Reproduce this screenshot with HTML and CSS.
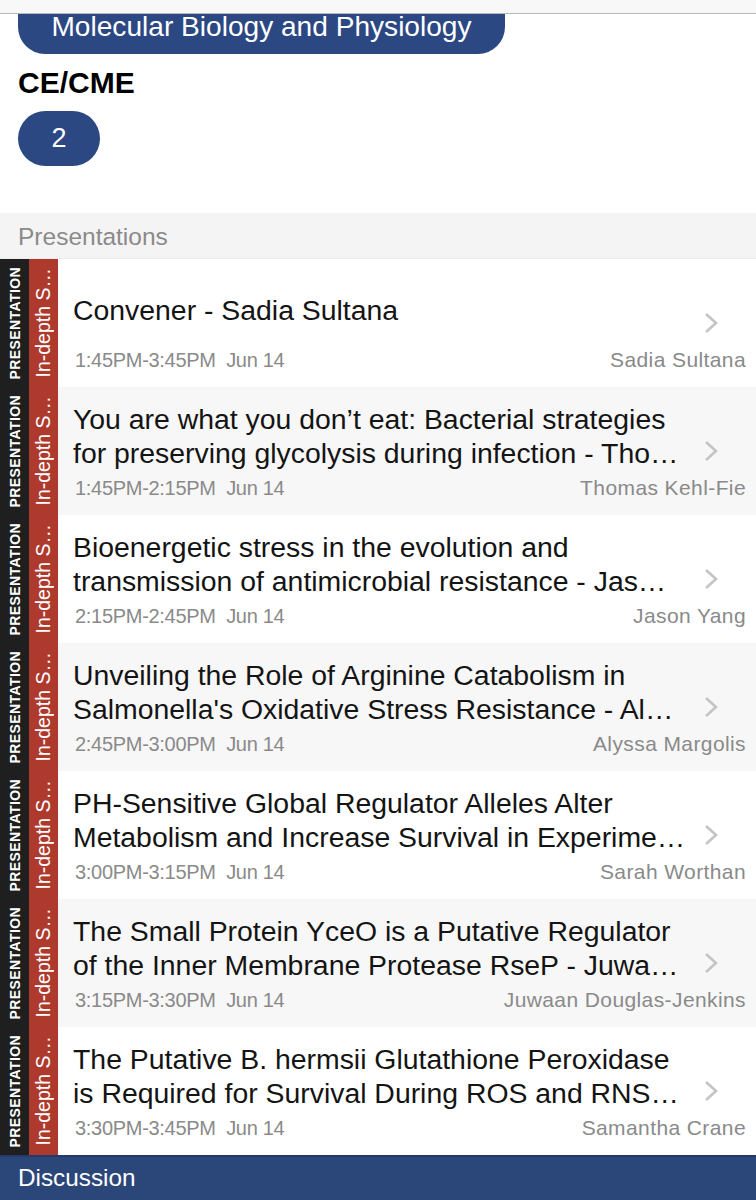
FILE: index.html
```html
<!DOCTYPE html>
<html>
<head>
<meta charset="utf-8">
<link rel="stylesheet" href="styles.css">
</head>
<body>
<div class="topbar"></div>
<div class="info">
  <div class="pill pill-wide">Molecular Biology and Physiology</div>
  <h2 class="label">CE/CME</h2>
  <div class="pill pill-num">2</div>
</div>
<div class="section">Presentations</div>
<div class="list">
  <div class="row">
    <div class="strip strip-type"><span>PRESENTATION</span></div>
    <div class="strip strip-track"><span>In-depth S…</span></div>
    <div class="content">
      <div class="title single"><span>Convener - Sadia Sultana</span></div>
      <svg class="chev" viewBox="0 0 14 22"><path d="M2 2 L12 11 L2 20" /></svg>
      <div class="meta"><span class="time">1:45PM-3:45PM&nbsp;&nbsp;Jun 14</span><span class="who">Sadia Sultana</span></div>
    </div>
  </div>
  <div class="row alt">
    <div class="strip strip-type"><span>PRESENTATION</span></div>
    <div class="strip strip-track"><span>In-depth S…</span></div>
    <div class="content">
      <div class="title"><span>You are what you don’t eat: Bacterial strategies</span><span>for preserving glycolysis during infection - Tho…</span></div>
      <svg class="chev" viewBox="0 0 14 22"><path d="M2 2 L12 11 L2 20" /></svg>
      <div class="meta"><span class="time">1:45PM-2:15PM&nbsp;&nbsp;Jun 14</span><span class="who">Thomas Kehl-Fie</span></div>
    </div>
  </div>
  <div class="row">
    <div class="strip strip-type"><span>PRESENTATION</span></div>
    <div class="strip strip-track"><span>In-depth S…</span></div>
    <div class="content">
      <div class="title"><span>Bioenergetic stress in the evolution and</span><span>transmission of antimicrobial resistance - Jas…</span></div>
      <svg class="chev" viewBox="0 0 14 22"><path d="M2 2 L12 11 L2 20" /></svg>
      <div class="meta"><span class="time">2:15PM-2:45PM&nbsp;&nbsp;Jun 14</span><span class="who">Jason Yang</span></div>
    </div>
  </div>
  <div class="row alt">
    <div class="strip strip-type"><span>PRESENTATION</span></div>
    <div class="strip strip-track"><span>In-depth S…</span></div>
    <div class="content">
      <div class="title"><span>Unveiling the Role of Arginine Catabolism in</span><span>Salmonella's Oxidative Stress Resistance - Al…</span></div>
      <svg class="chev" viewBox="0 0 14 22"><path d="M2 2 L12 11 L2 20" /></svg>
      <div class="meta"><span class="time">2:45PM-3:00PM&nbsp;&nbsp;Jun 14</span><span class="who">Alyssa Margolis</span></div>
    </div>
  </div>
  <div class="row">
    <div class="strip strip-type"><span>PRESENTATION</span></div>
    <div class="strip strip-track"><span>In-depth S…</span></div>
    <div class="content">
      <div class="title"><span>PH-Sensitive Global Regulator Alleles Alter</span><span>Metabolism and Increase Survival in Experime…</span></div>
      <svg class="chev" viewBox="0 0 14 22"><path d="M2 2 L12 11 L2 20" /></svg>
      <div class="meta"><span class="time">3:00PM-3:15PM&nbsp;&nbsp;Jun 14</span><span class="who">Sarah Worthan</span></div>
    </div>
  </div>
  <div class="row alt">
    <div class="strip strip-type"><span>PRESENTATION</span></div>
    <div class="strip strip-track"><span>In-depth S…</span></div>
    <div class="content">
      <div class="title"><span>The Small Protein YceO is a Putative Regulator</span><span>of the Inner Membrane Protease RseP - Juwa…</span></div>
      <svg class="chev" viewBox="0 0 14 22"><path d="M2 2 L12 11 L2 20" /></svg>
      <div class="meta"><span class="time">3:15PM-3:30PM&nbsp;&nbsp;Jun 14</span><span class="who">Juwaan Douglas-Jenkins</span></div>
    </div>
  </div>
  <div class="row">
    <div class="strip strip-type"><span>PRESENTATION</span></div>
    <div class="strip strip-track"><span>In-depth S…</span></div>
    <div class="content">
      <div class="title"><span>The Putative B. hermsii Glutathione Peroxidase</span><span>is Required for Survival During ROS and RNS…</span></div>
      <svg class="chev" viewBox="0 0 14 22"><path d="M2 2 L12 11 L2 20" /></svg>
      <div class="meta"><span class="time">3:30PM-3:45PM&nbsp;&nbsp;Jun 14</span><span class="who">Samantha Crane</span></div>
    </div>
  </div>
</div>
<div class="discussion">Discussion</div>
</body>
</html>
```
FILE: styles.css
```css
* { box-sizing: border-box; }
html, body { margin: 0; padding: 0; }
body {
  width: 756px;
  height: 1200px;
  overflow: hidden;
  background: #fff;
  font-family: "Liberation Sans", Arial, sans-serif;
  color: #111;
  position: relative;
}
.topbar {
  position: absolute;
  top: 0; left: 0; right: 0;
  height: 14px;
  background: #f8f8f8;
  border-bottom: 1px solid #b8b8b8;
  z-index: 2;
}
.info {
  padding: 0 18px;
  height: 213px;
  display: flex;
  flex-direction: column;
  align-items: flex-start;
}
.pill {
  background: #2b4882;
  color: #fff;
  display: flex;
  align-items: center;
  justify-content: center;
}
.pill-wide {
  width: 487px;
  height: 74px;
  margin-top: -20px;
  padding-top: 20px;
  border-radius: 0 0 27px 27px;
  font-size: 28.1px;
}
.label {
  margin: 12px 0 0;
  font-size: 30px;
  line-height: 34px;
  font-weight: bold;
  color: #000;
}
.pill-num {
  margin-top: 11px;
  width: 82px;
  height: 55px;
  border-radius: 28px;
  font-size: 27px;
}
.section {
  height: 46px;
  background: #f4f4f4;
  color: #8a8a8a;
  font-size: 24.5px;
  padding: 10px 18px 0;
  border-bottom: 1px solid #ececec;
}
.row {
  display: flex;
  height: 128px;
  background: #fff;
}
.row.alt { background: #f7f7f7; }
.strip {
  width: 29px;
  display: flex;
  align-items: center;
  justify-content: center;
  overflow: hidden;
}
.strip span {
  writing-mode: vertical-rl;
  transform: rotate(180deg);
  white-space: nowrap;
  color: #fff;
}
.strip-type { background: #1f1f1f; }
.strip-type span { font-size: 14px; font-weight: bold; letter-spacing: 0.4px; }
.strip-track { background: #ae3a2d; }
.strip-track span { font-size: 19.5px; }
.content {
  flex: 1;
  display: grid;
  grid-template-columns: 1fr 42px;
  grid-template-rows: 68px 22px;
  row-gap: 7px;
  padding: 15px 10px 16px 15px;
}
.title {
  grid-column: 1;
  grid-row: 1;
  display: flex;
  flex-direction: column;
  justify-content: center;
  font-size: 28.4px;
  line-height: 34px;
  color: #141414;
}
.title span { white-space: nowrap; }
.title.single { padding-top: 4px; }
.chev {
  grid-column: 2;
  grid-row: 1 / 3;
  align-self: center;
  justify-self: start;
  width: 14px;
  height: 22px;
}
.chev path {
  fill: none;
  stroke: #c4c4c8;
  stroke-width: 2.6;
}
.meta {
  grid-column: 1 / 3;
  grid-row: 2;
  display: flex;
  justify-content: space-between;
  align-items: baseline;
  color: #8a8a8a;
  font-size: 20px;
  line-height: 22px;
}
.time { padding-left: 2px; letter-spacing: -0.3px; }
.who { font-size: 21px; letter-spacing: 0.4px; }
.discussion {
  height: 45px;
  background: #2b4679;
  border-top: 2px solid #22396a;
  color: #fff;
  font-size: 24.3px;
  padding: 7px 18px 0;
}
```
